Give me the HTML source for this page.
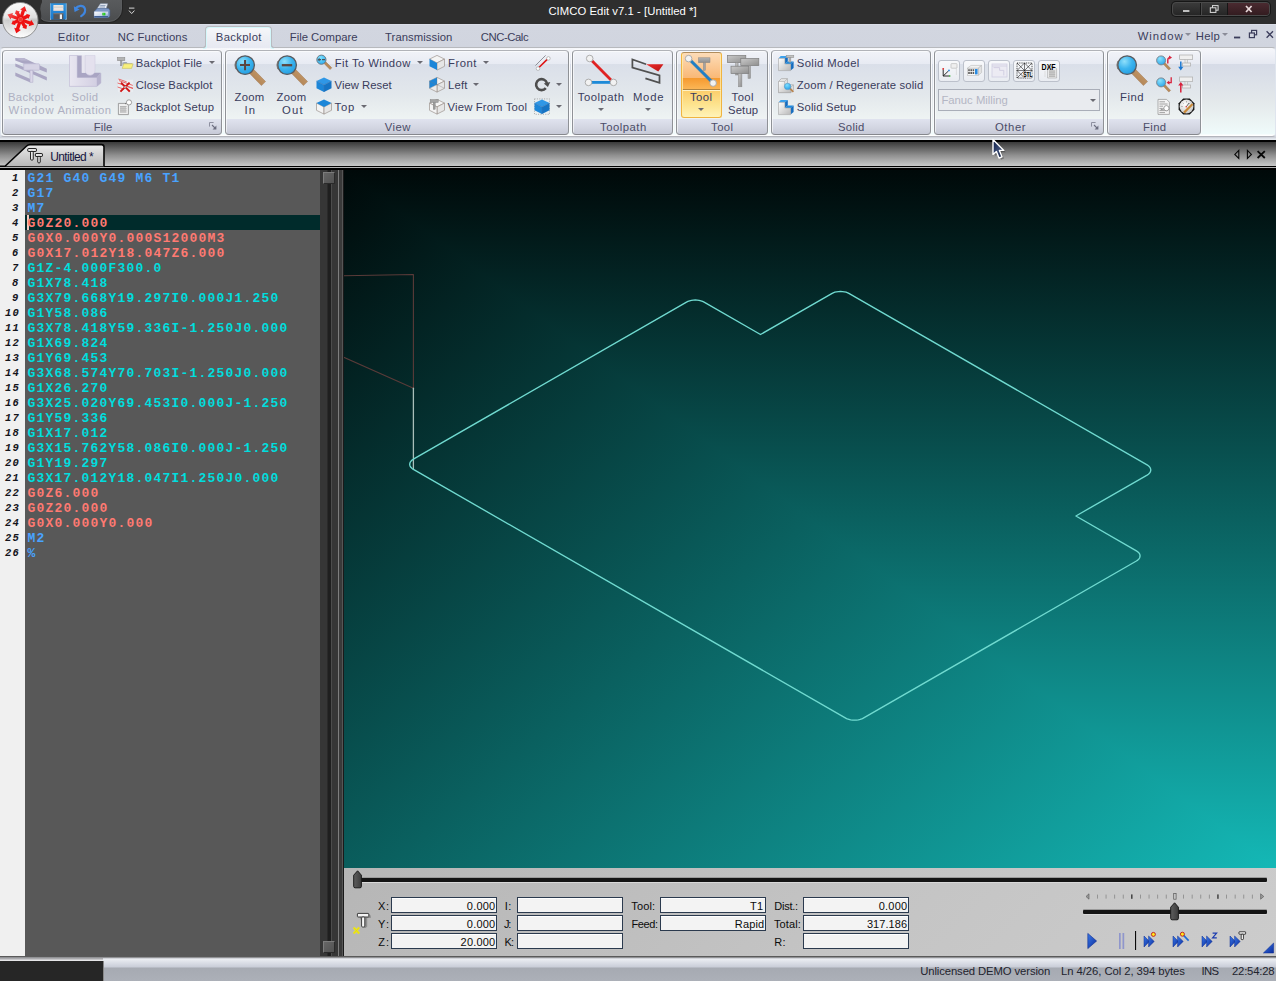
<!DOCTYPE html>
<html lang="en">
<head>
<meta charset="utf-8">
<title>CIMCO Edit v7.1 - [Untitled *]</title>
<style>

html,body{margin:0;padding:0;}
body{width:1276px;height:981px;overflow:hidden;background:#d1d5df;font-family:"Liberation Sans",sans-serif;font-size:12px;}
#app{position:relative;width:1276px;height:981px;overflow:hidden;}
#app div,#app span,#app svg{position:absolute;box-sizing:border-box;}
.t{white-space:pre;line-height:1;z-index:3;}
/* title bar */
#titlebar{left:0;top:0;width:1276px;height:24px;background:#2e2e2e;}
#qat{left:36px;top:-4px;width:86px;height:26px;border-radius:0 0 13px 13px/0 0 13px 13px;background:linear-gradient(#5b5d5f,#535557 55%,#4a4c4e);border:1px solid #5a5c5e;box-shadow:0 0 0 1px #242424;}
#winbtns{left:1172px;top:2px;width:98px;height:14px;border-radius:4px;border:1px solid #4a4a4a;box-shadow:0 0 0 1px #161616;background:linear-gradient(#3a3a3a,#262626);}
#winbtns .sep{top:0;width:1px;height:12px;background:#161616;box-shadow:1px 0 0 #4a4a4a;}
#winbtns .close{left:55px;top:0;width:41px;height:12px;background:linear-gradient(#4a2a30,#331c20);border-radius:0 3px 3px 0;}
/* tab row */
#tabrow{left:0;top:24px;width:1276px;height:24px;background:linear-gradient(#dfe2ec 0,#d2d6e0 1.5px,#d1d5df 24px);}
#tab-active{left:204.6px;top:1.6px;width:67.6px;height:22.2px;z-index:2;border:1px solid #b9bbc0;border-bottom:none;border-radius:4px 4px 0 0;background:linear-gradient(#f6f7fa,#eceef4 60%,#e7e9f2);box-shadow:inset 1px 1px 0 #d4f7fb,inset -1px 0 0 #d4f7fb;}
#tab-active:before,#tab-active:after{content:'';position:absolute;bottom:0;width:3px;height:3px;}
#tab-active:before{left:-3.6px;border-bottom:1px solid #b9bbc0;border-right:1px solid #b9bbc0;border-radius:0 0 3px 0;box-shadow:1px 1px 0 #d4f7fb;}
#tab-active:after{right:-3.6px;border-bottom:1px solid #b9bbc0;border-left:1px solid #b9bbc0;border-radius:0 0 0 3px;box-shadow:-1px 1px 0 #d4f7fb;}
/* ribbon */
#ribbon{left:0;top:47px;width:1276px;height:90px;border:1px solid #dfe5ee;border-top-color:#b7b9bd;border-bottom:1.3px solid #b3b5bc;border-radius:4px;background:linear-gradient(#f6f7fb 0,#e6e9f2 15.6px,#d6dbe7 15.8px,#dde2e9 36px,#e4e9eb 54px,#ebf3f3 72px,#effbfb 86px,#ffffff 87px);}
#ribbon-under{left:0;top:137px;width:1276px;height:3px;background:linear-gradient(#c9ccd4,#dde1e8 45%,#e8ecf1);}
.grp{top:3px;height:85px;border:1px solid #8f9297;border-top-color:#b1b3b8;border-bottom-color:#86888d;border-radius:4px;background:linear-gradient(#f1f3f8 0px,#e8ebf3 12.6px,#dadfe9 12.8px,#e3e8ec 45px,#eef3f3 67.5px,#e0e3ef 68px,#d4d7e3 76px,#c5c8d5 84px);box-shadow:0 0 0 1px #fafbfd, inset 1px 1px 0 rgba(255,255,255,.6);}
.ibtn{width:21.6px;height:21.4px;border:1px solid #bcc1cb;border-radius:3px;background:linear-gradient(#f8f9fb,#e9ecf1);}
.dd{width:0;height:0;border-left:3px solid transparent;border-right:3px solid transparent;border-top:3px solid #6a6a72;}
/* doc bar */
#docbar{left:0;top:140px;width:1276px;height:30px;background:linear-gradient(#000 0px,#000 1.7px,#3c3c3c 2.4px,#8e8e8e 15px,#c6c6c6 25.6px,#000 26px,#000 27px,#b4b4b4 27.2px,#b4b4b4 28px,#000 28.2px);}
/* editor */
#editor{left:0;top:170px;width:337px;height:786px;background:#585858;overflow:hidden;}
#gutter{left:0;top:0;width:25px;height:786px;background:#f0f0f0;}
#curline{left:25px;top:45px;width:295px;height:15px;background:#002b2b;}
#caret{left:27px;top:45px;width:1.5px;height:15px;background:#f2c8c0;}
#vscroll{left:320px;top:0;width:17px;height:786px;background:#363636;}
#vscroll .groove{left:6.6px;top:0;width:5px;height:786px;background:#1f1f1f;border-left:1px solid #2a2a2a;border-right:1px solid #4c4c4c;}
#vscroll .thumb{left:3px;width:11.5px;height:11.5px;background:linear-gradient(135deg,#666,#525252);border:1px solid #7c7c7c;border-right-color:#2a2a2a;border-bottom-color:#2a2a2a;}
#splitter{left:337px;top:170px;width:7px;height:788px;background:linear-gradient(to right,#363636 0,#363636 1px,#7e7e7e 1px,#7e7e7e 2px,#3a3a3a 2px,#3a3a3a 5px,#565656 5px,#565656 6px,#1a1a1a 6px);}
/* viewport */
#viewport{left:344px;top:170px;width:932px;height:698px;background:linear-gradient(180deg,#000909,#14b8b6);overflow:hidden;}
#viewport .tri{left:0;top:0;width:932px;height:698px;background:linear-gradient(140.95deg,#000909,#14b8b6);clip-path:polygon(0 0,100% 100%,0 100%);}
/* panel */
#panel{left:344px;top:868px;width:932px;height:88px;background:linear-gradient(135deg,#b6b6b6,#c4c4c4 55%,#cccccc);}
.fld{height:16px;border:1px solid #2b3a4e;background:#f3f3f3;box-shadow:inset 0 1px 0 #fff;}
.track{height:4px;background:#141414;border-radius:1px;box-shadow:0 1px 0 #d8d8d8,0 -1px 0 #9a9a9a;}
.sthumb{width:9px;height:18px;}
/* status */
#status{left:0;top:956px;width:1276px;height:25px;background:linear-gradient(#4a4a4a 0,#6a6a6a 1px,#b8bac0 2px,#eceef3 3px,#e2e5ec 5px,#c9cdd8 11px,#a6aab2 12px,#acb0b8 25px);}
#status .dark{left:0;top:5px;width:103.6px;height:20px;background:#262626;border-right:1px solid #888;}
#status .lite{left:0;top:2px;width:103px;height:3px;background:linear-gradient(#9a9a9e,#f4f4f6);}

</style>
</head>
<body>
<div id="app">
<div id="titlebar">
<div id="qat"></div>
<svg style="left:50px;top:3px" width="17" height="17" viewBox="0 0 17 17">
<defs><linearGradient id="sv" x1="0" y1="0" x2="0" y2="1"><stop offset="0" stop-color="#2f93de"/><stop offset="1" stop-color="#1a78cc"/></linearGradient></defs>
<rect x="0.3" y="0.3" width="16" height="16.2" fill="url(#sv)"/>
<path d="M0.3 0.3 V16.5 M16.3 0.3 V16.5" stroke="#9fd0f4" stroke-width="0.6"/>
<path d="M0.3 15.4 L1.4 16.5 H0.3 Z M16.3 15.4 L15.2 16.5 H16.3 Z" fill="#ffffff"/>
<rect x="3.4" y="2" width="10" height="5.6" fill="#e9e5e1"/><rect x="3.4" y="3.7" width="10" height="0.8" fill="#c9c3bb"/><rect x="3.4" y="6.6" width="10" height="1" fill="#f4d9cc"/>
<rect x="3.4" y="10.2" width="10" height="6.3" fill="#55575b"/><rect x="3.4" y="10.2" width="10" height="1" fill="#7a7c80"/><rect x="9.8" y="11.4" width="2.2" height="4.6" fill="#f0f0f0"/></svg>
<svg style="left:73px;top:3px" width="15" height="15" viewBox="0 0 15 15">
<path d="M2.2 5.6 C5 2.4 10.2 1.6 11.8 5.4 C13 8.6 10.6 11.6 8.2 13.2" fill="none" stroke="#3f86e0" stroke-width="2.2" stroke-linecap="round"/>
<path d="M0.8 3.2 L1.6 9 L6.6 6.6 Z" fill="#3f86e0"/></svg>
<svg style="left:93px;top:3px" width="18" height="16" viewBox="0 0 18 16">
<defs><linearGradient id="pr" x1="0" y1="0" x2="1" y2="1"><stop offset="0" stop-color="#ffffff"/><stop offset="0.6" stop-color="#c4d2ea"/><stop offset="1" stop-color="#6f8fc2"/></linearGradient></defs>
<path d="M4.2 5.6 L7.4 0.8 L14.6 0.8 L13.2 5.6 Z" fill="#f2f5fa" stroke="#8fa0b8" stroke-width="0.6"/>
<path d="M7.2 2.6 L12.6 2.6 M6.4 4 L12 4" stroke="#7f93b0" stroke-width="0.9"/>
<path d="M1.2 8.6 L4.2 5.4 H15.4 L16.8 7.2 V13 L15.4 14.6 H1.2 Z" fill="#7d98c6" stroke="#4c6a9a" stroke-width="0.5"/>
<path d="M1.2 8.6 H15 V14.4 H1.2 Z" fill="url(#pr)"/>
<rect x="1.2" y="13" width="13.8" height="1.5" fill="#3f5f96"/>
<rect x="9.4" y="9.8" width="3" height="2.6" fill="#12b412"/><rect x="10.2" y="10.4" width="1.2" height="1.2" fill="#7dff5a"/></svg>
<svg style="left:128.3px;top:6.7px" width="8" height="9" viewBox="0 0 8 9"><rect x="1" y="0.6" width="5.4" height="1" fill="#d8d8d8"/><path d="M1 3.6 L3.7 6.6 L6.4 3.6" fill="none" stroke="#d8d8d8" stroke-width="1"/></svg>
<span class="t" style="left:548.40px;top:6.00px;font-size:11.3px;color:#ffffff;letter-spacing:0.048px;">CIMCO Edit v7.1 - [Untitled *]</span>
<div id="winbtns"><div class="sep" style="left:27px"></div><div class="sep" style="left:54px"></div><div class="close"></div>
<svg style="left:0;top:0" width="96" height="12" viewBox="0 0 96 12">
<rect x="10" y="7.2" width="6.4" height="1.6" fill="#e4e4e4"/>
<rect x="39.5" y="2.6" width="5.6" height="4.6" fill="none" stroke="#dcdcdc" stroke-width="1"/><rect x="37.3" y="4.8" width="5.6" height="4.6" fill="#2c2c2c" stroke="#dcdcdc" stroke-width="1"/>
<path d="M73 3 L78.6 9 M78.6 3 L73 9" stroke="#e8d8da" stroke-width="1.7"/></svg>
</div>
</div>
<svg id="appbtn" style="left:0px;top:0px;z-index:5" width="42" height="42" viewBox="0 0 42 42">
<defs><linearGradient id="ab" x1="0" y1="0" x2="0" y2="1"><stop offset="0" stop-color="#fafafa"/><stop offset="0.42" stop-color="#dedede"/><stop offset="0.5" stop-color="#c2c2c2"/><stop offset="0.62" stop-color="#d4d4d4"/><stop offset="0.9" stop-color="#f6f6f6"/><stop offset="1" stop-color="#ffffff"/></linearGradient>
<radialGradient id="ab2" cx="0.5" cy="0.5" r="0.5"><stop offset="0" stop-color="#ffffff" stop-opacity="0.85"/><stop offset="0.75" stop-color="#ffffff" stop-opacity="0.25"/><stop offset="1" stop-color="#ffffff" stop-opacity="0"/></radialGradient>
<linearGradient id="ab3" x1="0" y1="0" x2="1" y2="1"><stop offset="0" stop-color="#ffffff" stop-opacity="0.6"/><stop offset="0.45" stop-color="#ffffff" stop-opacity="0"/></linearGradient></defs>
<path d="M0 24 V0 H44 Q40.5 3 40.2 9 Q42.4 16 40 24 Z" fill="#2e2e2e"/>
<circle cx="20.3" cy="20.2" r="17.7" fill="url(#ab)" stroke="#868686" stroke-width="0.9"/>
<ellipse cx="20.3" cy="20.2" rx="12" ry="16" fill="url(#ab2)"/>
<g fill="#ee1111"><polygon points="22.7,18.1 25.0,11.1 26.7,11.7 24.8,6.2 20.1,9.5 21.8,10.1 19.5,17.1"/><polygon points="19.2,17.3 12.4,14.7 13.0,12.9 7.5,14.6 10.6,19.5 11.2,17.8 18.0,20.3"/><polygon points="21.8,21.7 29.3,24.5 28.7,26.3 34.2,24.6 31.1,19.7 30.5,21.4 22.9,18.7"/><polygon points="18.3,20.9 16.0,28.3 14.2,27.8 16.2,33.2 20.9,29.9 19.2,29.3 21.5,21.9"/><polygon points="23.0,20.2 28.0,17.9 28.5,19.0 30.2,15.0 26.1,13.7 26.6,14.8 21.6,17.1"/><polygon points="20.1,22.1 23.3,27.2 22.2,27.8 26.4,29.0 27.2,24.8 26.2,25.4 23.0,20.3"/><polygon points="18.0,18.9 13.5,21.1 13.0,20.0 11.4,24.0 15.6,25.2 15.0,24.1 19.5,21.9"/><polygon points="21.2,17.0 18.9,12.3 20.0,11.8 16.0,10.2 14.8,14.3 15.9,13.8 18.1,18.4"/></g>
<circle cx="20.5" cy="19.5" r="2.1" fill="#f03a32"/>
<circle cx="20.3" cy="20.2" r="17.2" fill="url(#ab3)"/>
</svg>
<div id="tabrow"><div id="tab-active"></div></div>
<span class="t" style="left:57.70px;top:32.00px;font-size:11.3px;color:#3b3d5b;letter-spacing:0.477px;">Editor</span>
<span class="t" style="left:117.80px;top:32.00px;font-size:11.3px;color:#3b3d5b;letter-spacing:0.106px;">NC Functions</span>
<span class="t" style="left:215.80px;top:32.00px;font-size:11.3px;color:#3b3d5b;letter-spacing:0.322px;">Backplot</span>
<span class="t" style="left:289.80px;top:32.00px;font-size:11.3px;color:#3b3d5b;letter-spacing:-0.010px;">File Compare</span>
<span class="t" style="left:385.10px;top:32.00px;font-size:11.3px;color:#3b3d5b;letter-spacing:0.041px;">Transmission</span>
<span class="t" style="left:480.80px;top:32.00px;font-size:11.3px;color:#3b3d5b;letter-spacing:-0.435px;">CNC-Calc</span>
<span class="t" style="left:1137.70px;top:31.00px;font-size:11.3px;color:#3b3d5b;letter-spacing:0.943px;">Window</span>
<span class="t" style="left:1195.70px;top:31.00px;font-size:11.3px;color:#3b3d5b;letter-spacing:0.322px;">Help</span>
<div class="dd" style="left:1184.5px;top:33px;border-top-color:#8a8c98"></div>
<div class="dd" style="left:1221.5px;top:33px;border-top-color:#8a8c98"></div>
<svg style="left:1232px;top:28px" width="44" height="12" viewBox="0 0 44 12">
<rect x="2" y="8.6" width="6.2" height="1.8" fill="#3b3d5b"/>
<rect x="19.6" y="2.4" width="5" height="4.4" fill="none" stroke="#3b3d5b" stroke-width="1.2"/><rect x="17.4" y="5" width="5" height="4.6" fill="#d1d5df" stroke="#3b3d5b" stroke-width="1.2"/>
<path d="M34.6 3.2 L41 9.8 M41 3.2 L34.6 9.8" stroke="#3b3d5b" stroke-width="1.3"/></svg>
<div id="ribbon"></div><div id="ribbon-under"></div>
<div class="grp" id="grp-file" style="left:2px;top:50px;width:220px"></div>
<div class="grp" id="grp-view" style="left:225px;top:50px;width:344px"></div>
<div class="grp" id="grp-toolpath" style="left:572px;top:50px;width:101px"></div>
<div class="grp" id="grp-tool" style="left:676px;top:50px;width:92px"></div>
<div class="grp" id="grp-solid" style="left:771px;top:50px;width:160px"></div>
<div class="grp" id="grp-other" style="left:934px;top:50px;width:170px"></div>
<div class="grp" id="grp-find" style="left:1107px;top:50px;width:94px"></div>
<svg style="left:15px;top:56px" width="33" height="28" viewBox="0 0 33 28"><g fill="#aaa6c3">
<path d="M0.3 2.1 H8.7 L31.8 12.8 V16.4 L0.3 4.5 Z"/>
<path d="M0.3 7.4 L31.8 21 V24.6 L0.3 10.5 Z"/>
<path d="M0.3 16.4 L15.4 23 V26.5 L0.3 19.9 Z"/>
</g>
<path d="M0.3 2.1 H8.7 L14 4.6 H6 Z" fill="#b9b5cf"/>
<rect x="8.7" y="7.8" width="15.9" height="6.4" rx="0.8" fill="#d6d3e5" stroke="#bcb8d2" stroke-width="0.7"/>
<rect x="15" y="14.2" width="2.9" height="12" fill="#dad7e8" stroke="#b4b0cc" stroke-width="0.6"/></svg>
<svg style="left:69px;top:55px" width="33" height="32" viewBox="0 0 33 32"><defs><linearGradient id="g1" x1="0" y1="0" x2="1" y2="0"><stop offset="0" stop-color="#e9e7f1"/><stop offset="1" stop-color="#cfcbe0"/></linearGradient></defs>
<path d="M0.4 0.4 H8.3 V22.4 H27.8 L31.8 18 V28 L27.8 31.4 H0.4 Z" fill="url(#g1)" stroke="#c4c0d8" stroke-width="0.8"/>
<path d="M8.3 0.4 H12.8 V17.8 H31.8 L27.8 22.4 H8.3 Z" fill="#a9a5c3"/>
<path d="M27.8 22.4 L31.8 18 V28 L27.8 31.4 Z" fill="#b6b2cd"/>
<path d="M12.8 0.4 H16.2 V17.8 H12.8 Z" fill="#e7e5ef"/>
<path d="M16.2 0.4 H26 V15.6 A4.9 4.6 0 0 1 16.2 15.6 Z" fill="#e4e1ee" stroke="#d0cde0" stroke-width="0.6"/></svg>
<span class="t" style="left:8.00px;top:92.00px;font-size:11.3px;color:#aeb0c2;letter-spacing:0.322px;">Backplot</span>
<span class="t" style="left:8.60px;top:105.00px;font-size:11.3px;color:#aeb0c2;letter-spacing:0.963px;">Window</span>
<span class="t" style="left:71.60px;top:92.00px;font-size:11.3px;color:#aeb0c2;letter-spacing:0.344px;">Solid</span>
<span class="t" style="left:57.40px;top:105.00px;font-size:11.3px;color:#aeb0c2;letter-spacing:0.431px;">Animation</span>
<svg style="left:117px;top:56px" width="17" height="14" viewBox="0 0 17 14"><rect x="0.6" y="1.6" width="7.2" height="3" fill="#b4b4b4" stroke="#8c8c8c" stroke-width="0.6"/>
<rect x="3.3" y="4.6" width="1.7" height="5.2" fill="#a4a4a4" stroke="#8a8a8a" stroke-width="0.4"/>
<path d="M5.4 6.8 L7 6 H9.6 L10.6 7.2 H15 V8.6 H5.4 Z" fill="#8a93a6" opacity=".8"/>
<path d="M6.8 7.8 H16.1 L14.6 12.4 H5.2 Z" fill="#f7ef7c" stroke="#c4bc62" stroke-width="0.6"/></svg>
<svg style="left:117px;top:78px" width="17" height="15" viewBox="0 0 17 15"><rect x="1" y="1.8" width="15" height="12.4" fill="#e9edf1"/>
<g stroke="#e85a5a" stroke-width="0.9"><path d="M1.4 1 L9.6 3.8"/><path d="M2 2.6 L15.8 7.4"/><path d="M0.6 5 L16 10.2"/><path d="M0.6 9 L7 11.2"/><path d="M10 8.4 L16 10.6" /></g>
<path d="M3.4 13.6 L12.6 4.6 M4 4.6 L12.8 13.6" stroke="#d01414" stroke-width="2"/>
<path d="M7.2 9.4 L9.4 8.6" stroke="#a8e0e4" stroke-width="1.3"/></svg>
<svg style="left:117px;top:99px" width="16" height="17" viewBox="0 0 16 17"><path d="M1.4 4.4 H9.4 L11.4 6.6 V15.6 H1.4 Z" fill="#f0f0f0" stroke="#8c8c8c" stroke-width="0.8"/>
<g stroke="#a8a8a8" stroke-width="0.9"><path d="M3 7.6 H9.6"/><path d="M3 9.4 H9.6"/><path d="M3 11.2 H9.6"/><path d="M3 13 H9.6"/></g>
<rect x="3" y="8" width="6" height="5.4" fill="#bdbdbd" opacity=".7"/>
<path d="M8 5 L10.8 3" stroke="#6a6a6a" stroke-width="0.9"/>
<circle cx="12" cy="3.4" r="2.6" fill="#ffffff" stroke="#8a8a8a" stroke-width="0.8"/></svg>
<span class="t" style="left:135.80px;top:58.00px;font-size:11.3px;color:#3a3c5c;letter-spacing:0.136px;">Backplot File</span>
<div class="dd" style="left:208.5px;top:61px"></div>
<span class="t" style="left:135.80px;top:80.00px;font-size:11.3px;color:#3a3c5c;letter-spacing:0.088px;">Close Backplot</span>
<span class="t" style="left:135.80px;top:102.00px;font-size:11.3px;color:#3a3c5c;letter-spacing:0.169px;">Backplot Setup</span>
<span class="t" style="left:93.80px;top:122.00px;font-size:11.3px;color:#4b4c68;letter-spacing:0.132px;">File</span>
<svg style="left:209px;top:122px" width="8" height="8" viewBox="0 0 8 8"><path d="M0.5 4.6 V0.5 H4.6" fill="none" stroke="#8e90a0" stroke-width="1"/><path d="M3 3 L6.6 6.6" stroke="#6c6e80" stroke-width="1.1"/><path d="M7.4 3.6 V7.4 H3.6 Z" fill="#6c6e80"/></svg>
<svg style="left:233px;top:53px" width="34" height="34" viewBox="0 0 34 34"><defs><radialGradient id="g2" cx="0.36" cy="0.3" r="0.8"><stop offset="0" stop-color="#8fe0fb"/><stop offset="0.5" stop-color="#3cb4ee"/><stop offset="1" stop-color="#1f9ae0"/></radialGradient>
<linearGradient id="g3" x1="0" y1="1" x2="1" y2="0"><stop offset="0" stop-color="#a87a4c"/><stop offset="1" stop-color="#caa070"/></linearGradient></defs>
<path d="M16.2 20 L20.2 16 L32.6 28.6 L28.4 32.6 Z" fill="url(#g3)" stroke="#9a7048" stroke-width="0.4"/>
<circle cx="12.1" cy="12.1" r="9.3" fill="url(#g2)" stroke="#5a5a5e" stroke-width="1.3"/>
<path d="M3 8.4 A 9.6 9.6 0 0 0 3 16" fill="none" stroke="#6a6664" stroke-width="1.6" opacity=".8"/><path d="M7 12.1 H17 M12.05 7 V17.2" stroke="#5b4640" stroke-width="2"/></svg>
<svg style="left:275px;top:53px" width="34" height="34" viewBox="0 0 34 34"><defs><radialGradient id="g4" cx="0.36" cy="0.3" r="0.8"><stop offset="0" stop-color="#8fe0fb"/><stop offset="0.5" stop-color="#3cb4ee"/><stop offset="1" stop-color="#1f9ae0"/></radialGradient>
<linearGradient id="g5" x1="0" y1="1" x2="1" y2="0"><stop offset="0" stop-color="#a87a4c"/><stop offset="1" stop-color="#caa070"/></linearGradient></defs>
<path d="M16.2 20 L20.2 16 L32.6 28.6 L28.4 32.6 Z" fill="url(#g5)" stroke="#9a7048" stroke-width="0.4"/>
<circle cx="12.1" cy="12.1" r="9.3" fill="url(#g4)" stroke="#5a5a5e" stroke-width="1.3"/>
<path d="M3 8.4 A 9.6 9.6 0 0 0 3 16" fill="none" stroke="#6a6664" stroke-width="1.6" opacity=".8"/><path d="M6.8 12.2 H17.2" stroke="#5b4640" stroke-width="2.3"/></svg>
<span class="t" style="left:234.60px;top:92.00px;font-size:11.3px;color:#3a3c5c;letter-spacing:0.203px;">Zoom</span>
<span class="t" style="left:244.60px;top:105.00px;font-size:11.3px;color:#3a3c5c;letter-spacing:0.978px;">In</span>
<span class="t" style="left:276.60px;top:92.00px;font-size:11.3px;color:#3a3c5c;letter-spacing:0.203px;">Zoom</span>
<span class="t" style="left:282.00px;top:105.00px;font-size:11.3px;color:#3a3c5c;letter-spacing:1.191px;">Out</span>
<svg style="left:316px;top:54px" width="17" height="17" viewBox="0 0 17 17"><defs><radialGradient id="g6" cx="0.4" cy="0.3" r="0.8"><stop offset="0" stop-color="#7fe0ff"/><stop offset="1" stop-color="#22a8ee"/></radialGradient></defs>
<path d="M8 9.4 L9.8 7.8 L15.8 13.8 L14 15.6 Z" fill="#b88a58" stroke="#98704a" stroke-width="0.4"/>
<circle cx="5.4" cy="5.7" r="4.6" fill="url(#g6)" stroke="#6a7078" stroke-width="0.9"/>
<path d="M1.6 5.7 L3.6 3.8 V7.6 Z M3.4 5.1 H5 V6.3 H3.4 Z M6 5.1 H9 V6.3 H6 Z" fill="#4a5058"/></svg>
<svg style="left:316px;top:76px" width="16" height="17" viewBox="0 0 16 17"><polygon points="8,1.4 15.5,5.1 8,8.9 0.5,5.1" fill="#2f97e6"/><polygon points="0.5,5.1 8,8.9 8,16.1 0.5,12.3" fill="#1c86d8"/><polygon points="8,8.9 15.5,5.1 15.5,12.3 8,16.1" fill="#1674c4"/><path d="M8 8.9 V16 M0.6 5.1 L8 8.9 L15.4 5.1" fill="none" stroke="#3a78b8" stroke-width="0.7" opacity=".8"/></svg>
<svg style="left:316px;top:98px" width="16" height="17" viewBox="0 0 16 17"><polygon points="0.5,5.1 8,8.9 8,16.1 0.5,12.3" fill="#f4f4f4" stroke="#9c948e" stroke-width="0.7"/><polygon points="8,8.9 15.5,5.1 15.5,12.3 8,16.1" fill="#e6e6e6" stroke="#9c948e" stroke-width="0.7"/><polygon points="8,1.4 15.5,5.1 8,8.9 0.5,5.1" fill="#1c86d8"/></svg>
<span class="t" style="left:334.80px;top:58.00px;font-size:11.3px;color:#3a3c5c;letter-spacing:0.405px;">Fit To Window</span>
<div class="dd" style="left:416.6px;top:61px"></div>
<span class="t" style="left:334.60px;top:80.00px;font-size:11.3px;color:#3a3c5c;letter-spacing:0.007px;">View Reset</span>
<span class="t" style="left:334.60px;top:102.00px;font-size:11.3px;color:#3a3c5c;letter-spacing:0.741px;">Top</span>
<div class="dd" style="left:360.8px;top:105px"></div>
<svg style="left:429px;top:54px" width="16" height="17" viewBox="0 0 16 17"><polygon points="8,1.4 15.5,5.1 8,8.9 0.5,5.1" fill="#f4f4f4" stroke="#9c948e" stroke-width="0.7"/><polygon points="8,8.9 15.5,5.1 15.5,12.3 8,16.1" fill="#e6e6e6" stroke="#9c948e" stroke-width="0.7"/><polygon points="0.5,5.1 8,8.9 8,16.1 0.5,12.3" fill="#1c86d8"/></svg>
<svg style="left:429px;top:76px" width="16" height="17" viewBox="0 0 16 17"><polygon points="8,1.4 15.5,5.1 8,8.9 0.5,5.1" fill="#f4f4f4" stroke="#9c948e" stroke-width="0.7"/><polygon points="8,8.9 15.5,5.1 15.5,12.3 8,16.1" fill="#e6e6e6" stroke="#9c948e" stroke-width="0.7"/><polygon points="0.5,5.1 8,8.9 8,16.1 0.5,12.3" fill="#ececec" stroke="#9c948e" stroke-width="0.7"/><polygon points="0.5,5.1 8,1.4 8,8.6 0.5,12.3" fill="#1c86d8"/><path d="M8 1.4 V8.6 L15.5 12.3 M8 8.6 L0.5 12.3 M0.5 5.1 L8 8.9" fill="none" stroke="#7a7a80" stroke-width="0.5" opacity=".7"/></svg>
<svg style="left:429px;top:98px" width="16" height="17" viewBox="0 0 16 17"><polygon points="8,1.4 15.5,5.1 8,8.9 0.5,5.1" fill="#f4f4f4" stroke="#9c948e" stroke-width="0.7"/><polygon points="8,8.9 15.5,5.1 15.5,12.3 8,16.1" fill="#e6e6e6" stroke="#9c948e" stroke-width="0.7"/><polygon points="0.5,5.1 8,8.9 8,16.1 0.5,12.3" fill="#f4f4f4" stroke="#9c948e" stroke-width="0.7"/><rect x="1.2" y="1.6" width="8" height="2.8" fill="#a4a4a4" stroke="#868686" stroke-width="0.5"/><rect x="4.2" y="4.4" width="2" height="7" fill="#9a9a9a" stroke="#868686" stroke-width="0.4"/></svg>
<span class="t" style="left:448.10px;top:58.00px;font-size:11.3px;color:#3a3c5c;letter-spacing:0.481px;">Front</span>
<div class="dd" style="left:482.8px;top:61px"></div>
<span class="t" style="left:448.10px;top:80.00px;font-size:11.3px;color:#3a3c5c;letter-spacing:0.119px;">Left</span>
<div class="dd" style="left:473.4px;top:83px"></div>
<span class="t" style="left:447.60px;top:102.00px;font-size:11.3px;color:#3a3c5c;letter-spacing:0.143px;">View From Tool</span>
<svg style="left:534px;top:54px" width="17" height="17" viewBox="0 0 17 17"><path d="M1.4 11.6 L11.6 1.4 M3.4 15 L15 3.6" stroke="#7a7a82" stroke-width="0.8"/>
<path d="M4.4 14 L14 4.6" stroke="#e01818" stroke-width="1.6"/>
<circle cx="4" cy="14.6" r="1.8" fill="#fff" stroke="#9a9a9a" stroke-width="0.6"/><circle cx="14.4" cy="4.4" r="1.8" fill="#fff" stroke="#9a9a9a" stroke-width="0.6"/></svg>
<svg style="left:534px;top:76px" width="17" height="17" viewBox="0 0 17 17"><path d="M11.81 12.14 A5.5 5.5 0 1 1 12.91 7.18" fill="none" stroke="#4e4e4e" stroke-width="2.6"/>
<path d="M9.8 7.6 L16.3 6 L13.9 11 Z" fill="#4e4e4e"/></svg>
<svg style="left:534px;top:98px" width="16" height="17" viewBox="0 0 16 17"><rect x="0.5" y="0.9" width="15" height="15.4" fill="none" stroke="#8a8a8a" stroke-width="0.7" stroke-dasharray="1 1.4"/><polygon points="8,1.4 15.5,5.1 8,8.9 0.5,5.1" fill="#2f97e6"/><polygon points="0.5,5.1 8,8.9 8,16.1 0.5,12.3" fill="#1c86d8"/><polygon points="8,8.9 15.5,5.1 15.5,12.3 8,16.1" fill="#1674c4"/><path d="M8 8.9 V16 M0.6 5.1 L8 8.9 L15.4 5.1" fill="none" stroke="#3a78b8" stroke-width="0.7" opacity=".8"/></svg>
<div class="dd" style="left:555.6px;top:83px"></div>
<div class="dd" style="left:555.6px;top:105px"></div>
<span class="t" style="left:384.80px;top:122.00px;font-size:11.3px;color:#4b4c68;letter-spacing:0.434px;">View</span>
<svg style="left:583px;top:52px" width="36" height="36" viewBox="0 0 36 36"><path d="M5.5 30.4 H30.5" stroke="#1e8ad8" stroke-width="2.8"/>
<path d="M6.7 6.5 L30.5 30.4" stroke="#e02222" stroke-width="2.8"/>
<g fill="#f2f2f2" stroke="#a6a6a6" stroke-width="0.9"><circle cx="6.7" cy="6.5" r="3.3"/><circle cx="5.5" cy="30.4" r="3.3"/><circle cx="30.5" cy="30.4" r="3.3"/></g></svg>
<svg style="left:631px;top:57px" width="34" height="28" viewBox="0 0 34 28"><defs><linearGradient id="g7" x1="0" y1="0" x2="1" y2="1"><stop offset="0" stop-color="#ee2a2a"/><stop offset="1" stop-color="#b81414"/></linearGradient></defs>
<path d="M15.1 7.3 L1.4 2.4 V10.6 L28.5 18.5 V25.9 L14.4 21.4" fill="none" stroke="#505050" stroke-width="1.75"/>
<path d="M15.1 7.3 L32.4 7.2 L27.3 14.5 Z" fill="url(#g7)"/></svg>
<span class="t" style="left:577.80px;top:92.00px;font-size:11.3px;color:#3a3c5c;letter-spacing:0.497px;">Toolpath</span>
<div class="dd" style="left:597.6px;top:107.5px"></div>
<span class="t" style="left:632.90px;top:92.00px;font-size:11.3px;color:#3a3c5c;letter-spacing:0.811px;">Mode</span>
<div class="dd" style="left:644.6px;top:107.5px"></div>
<span class="t" style="left:600.00px;top:122.00px;font-size:11.3px;color:#4b4c68;letter-spacing:0.497px;">Toolpath</span>
<div id="toolbtn" style="left:680.5px;top:52px;width:41px;height:66px;border:1px solid #f0b440;border-top-color:#b08c5c;border-radius:3px;background:linear-gradient(#fddcb8 0,#f9b876 25px,#f5992e 25px,#fbb656 36px,#b08440 36px,#b08440 37px,#fff2c4 37px,#fff2c4 38px,#fcce6c 38px,#fde490 52px,#fff3b8 64px);box-shadow:inset 1px 0 0 rgba(255,236,170,.8),inset -1px 0 0 rgba(255,236,170,.8);"></div>
<svg style="left:683px;top:53px" width="36" height="36" viewBox="0 0 36 36"><defs><linearGradient id="g8" x1="0" y1="0" x2="0" y2="1"><stop offset="0" stop-color="#b4b4b4"/><stop offset="1" stop-color="#8e8e8e"/></linearGradient></defs>
<rect x="15.5" y="4.8" width="11.5" height="4.8" fill="url(#g8)" stroke="#8a8682" stroke-width="0.5"/><rect x="20.3" y="9.6" width="2.2" height="7.9" fill="#a2a2a2" stroke="#8a8682" stroke-width="0.4"/>
<path d="M5.6 5.6 L30.1 30.1" stroke="#1e8ad8" stroke-width="2.8"/><path d="M5.6 5.6 L30.1 30.1" stroke="#2a5f8e" stroke-width="3.6" opacity=".25"/>
<g fill="#f2f2f2" stroke="#a6a6a6" stroke-width="0.9"><circle cx="5.6" cy="5.6" r="3.3"/><circle cx="30.1" cy="30.1" r="3.3"/></g></svg>
<svg style="left:727px;top:54px" width="33" height="34" viewBox="0 0 33 34"><defs><linearGradient id="g9" x1="0" y1="0" x2="1" y2="1"><stop offset="0" stop-color="#cacaca"/><stop offset="1" stop-color="#8e8e8e"/></linearGradient></defs><rect x="0.4" y="1.4" width="18.4" height="7.2" fill="url(#g9)" stroke="#7e7e7e" stroke-width="0.7"/><rect x="8.5" y="8.6" width="2.6" height="12.4" fill="url(#g9)" stroke="#8a8a8a" stroke-width="0.5"/><rect x="13.8" y="4.4" width="18" height="7.2" fill="url(#g9)" stroke="#7e7e7e" stroke-width="0.7"/><rect x="21" y="11.6" width="2.5" height="12.8" fill="url(#g9)" stroke="#8a8a8a" stroke-width="0.5"/><rect x="4" y="12.2" width="17.8" height="7.4" fill="url(#g9)" stroke="#7e7e7e" stroke-width="0.7"/><rect x="11.3" y="19.6" width="3.6" height="13.2" fill="url(#g9)" stroke="#8a8a8a" stroke-width="0.5"/></svg>
<span class="t" style="left:690.00px;top:92.00px;font-size:11.3px;color:#3a3c5c;letter-spacing:0.455px;">Tool</span>
<div class="dd" style="left:697.8px;top:107.5px"></div>
<span class="t" style="left:731.60px;top:92.00px;font-size:11.3px;color:#3a3c5c;letter-spacing:0.422px;">Tool</span>
<span class="t" style="left:728.00px;top:105.00px;font-size:11.3px;color:#3a3c5c;letter-spacing:0.142px;">Setup</span>
<span class="t" style="left:711.10px;top:122.00px;font-size:11.3px;color:#4b4c68;letter-spacing:0.422px;">Tool</span>
<svg style="left:778px;top:55px" width="17" height="17" viewBox="0 0 17 17"><defs><linearGradient id="g10" x1="0" y1="0" x2="1" y2="1"><stop offset="0" stop-color="#ffffff"/><stop offset="1" stop-color="#b8b8b8"/></linearGradient></defs><path d="M0.5 3.4 L2.7 1 H9.8 L6.8 3.4 Z" fill="#3aa0ec"/>
<path d="M6.8 3.4 L9.8 1 V6.6 L6.8 9 Z" fill="#146cc0"/>
<path d="M6.8 9 L9.8 6.6 H15.6 L12.6 9 Z" fill="#1c8ae0"/>
<path d="M12.6 9 L15.6 6.6 V13 L12.6 15.6 Z" fill="#146cc0"/>
<path d="M0.5 3.4 H6.8 V9 H12.6 V15.6 H0.5 Z" fill="url(#g10)" stroke="#a4a4a4" stroke-width="0.6"/><rect x="8.2" y="0.3" width="7.6" height="2.4" fill="#c2c2c2" stroke="#8e8e8e" stroke-width="0.5"/><rect x="10.9" y="2.7" width="2" height="4.6" fill="#b0b0b0" stroke="#8e8e8e" stroke-width="0.4"/></svg>
<svg style="left:778px;top:77px" width="17" height="17" viewBox="0 0 17 17"><defs><linearGradient id="g11" x1="0" y1="0" x2="1" y2="1"><stop offset="0" stop-color="#ffffff"/><stop offset="1" stop-color="#b8b8b8"/></linearGradient></defs><path d="M0.5 4.5 L3.4 1.6 H9.4 V7.8 H15.4 V13 L13 15.6 H0.5 Z" fill="#e4e4e4" stroke="#a8a8a8" stroke-width="0.7"/>
<path d="M0.5 4.5 H6.6 V10.2 H13 V15.6 H0.5 Z" fill="url(#g11)" stroke="#a8a8a8" stroke-width="0.6"/>
<path d="M6.6 4.5 L9.4 1.6 M13 10.2 L15.4 7.8" stroke="#a8a8a8" stroke-width="0.6"/>
<defs><radialGradient id="g12" cx=".4" cy=".3" r=".8"><stop offset="0" stop-color="#7fe0ff"/><stop offset="1" stop-color="#1f9ae6"/></radialGradient></defs>
<path d="M11 11.8 L12.2 10.6 L16 14.2 L14.8 15.6 Z" fill="#b88450"/>
<circle cx="9.6" cy="9.4" r="3.2" fill="url(#g12)" stroke="#5a9ac8" stroke-width="0.6"/></svg>
<svg style="left:778px;top:99px" width="17" height="17" viewBox="0 0 17 17"><defs><linearGradient id="g13" x1="0" y1="0" x2="1" y2="1"><stop offset="0" stop-color="#ffffff"/><stop offset="1" stop-color="#b8b8b8"/></linearGradient></defs><path d="M0.5 3.4 L2.7 1 H9.8 L6.8 3.4 Z" fill="#3aa0ec"/>
<path d="M6.8 3.4 L9.8 1 V6.6 L6.8 9 Z" fill="#146cc0"/>
<path d="M6.8 9 L9.8 6.6 H15.6 L12.6 9 Z" fill="#1c8ae0"/>
<path d="M12.6 9 L15.6 6.6 V13 L12.6 15.6 Z" fill="#146cc0"/>
<path d="M0.5 3.4 H6.8 V9 H12.6 V15.6 H0.5 Z" fill="url(#g13)" stroke="#a4a4a4" stroke-width="0.6"/></svg>
<span class="t" style="left:796.80px;top:58.00px;font-size:11.3px;color:#3a3c5c;letter-spacing:0.347px;">Solid Model</span>
<span class="t" style="left:796.80px;top:80.00px;font-size:11.3px;color:#3a3c5c;letter-spacing:0.126px;">Zoom / Regenerate solid</span>
<span class="t" style="left:796.80px;top:102.00px;font-size:11.3px;color:#3a3c5c;letter-spacing:0.152px;">Solid Setup</span>
<span class="t" style="left:838.00px;top:122.00px;font-size:11.3px;color:#4b4c68;letter-spacing:0.319px;">Solid</span>
<div class="ibtn" style="left:938.2px;top:60.3px"></div>
<svg style="left:940.5px;top:62.3px" width="17" height="17" viewBox="0 0 17 17"><rect x="10" y="1.6" width="6" height="4.6" rx="0.6" fill="#efefef" stroke="#b4b4b4" stroke-width="0.6"/><path d="M15.4 6.4 V13" stroke="#cfcfcf" stroke-width="0.6"/>
<path d="M2.2 7.4 V14 H8.4 M2.2 14 L7.6 8.8" fill="none" stroke="#161616" stroke-width="0.9"/>
<circle cx="2.2" cy="6.8" r="0.9" fill="#e02020"/><circle cx="8" cy="8.4" r="0.9" fill="#2a8ae0"/><path d="M8.2 12.9 L10 14 L8.2 15.1 Z" fill="#30b030"/></svg>
<div class="ibtn" style="left:963.2px;top:60.3px"></div>
<svg style="left:965.5px;top:62.3px" width="17" height="17" viewBox="0 0 17 17"><path d="M1.4 6.2 L5 3.4 H15.6 L12.2 6.2 Z" fill="#f2f2f2" stroke="#b0b0b0" stroke-width="0.5"/><path d="M12.2 6.2 L15.6 3.4 V10.6 L12.2 13.4 Z" fill="#e2e2e2" stroke="#b0b0b0" stroke-width="0.5"/>
<rect x="1.4" y="6.2" width="10.8" height="7.2" fill="#fafafa" stroke="#b0b0b0" stroke-width="0.5"/>
<g fill="#5a5a5a"><rect x="2.2" y="7.2" width="1.6" height="2"/><rect x="4.4" y="7.2" width="1.6" height="2"/><rect x="6.6" y="7.2" width="1.6" height="2"/><rect x="2.2" y="10" width="1.6" height="2"/><rect x="4.4" y="10" width="1.6" height="2"/><rect x="6.6" y="10" width="1.6" height="2"/></g>
<rect x="9" y="7" width="2.6" height="5.4" fill="#2a8ae0"/></svg>
<div class="ibtn" style="left:988.2px;top:60.3px"></div>
<svg style="left:990.5px;top:62.3px" width="17" height="17" viewBox="0 0 17 17"><rect x="1" y="2" width="15" height="13" fill="#ecebf3" stroke="#d0cde0" stroke-width="0.8"/><path d="M1 4 H16" stroke="#d0cde0" stroke-width="0.8"/>
<path d="M2.6 5.6 H8.6 V8.4 H12.8 V13.4" fill="none" stroke="#cfcce0" stroke-width="0.9"/></svg>
<div class="ibtn" style="left:1013.2px;top:60.3px"></div>
<svg style="left:1015.5px;top:62.3px" width="17" height="17" viewBox="0 0 17 17"><g stroke="#181818" stroke-width="0.75" fill="none"><rect x="1" y="1" width="15" height="15" stroke-dasharray="1 0.8"/><path d="M1 1 L8.5 8.5 L16 1 M1 16 L8.5 8.5 L16 16 M1 8.5 H16 M8.5 1 V16 M1 8.5 L8.5 1 L16 8.5 L8.5 16 Z" opacity=".75"/></g>
<rect x="7" y="9.6" width="9.4" height="6" fill="#e8e8e8" opacity=".85"/>
<text x="7.2" y="15" font-family="Liberation Sans, sans-serif" font-weight="700" font-size="6.6" fill="#000" textLength="9.4" lengthAdjust="spacingAndGlyphs">STL</text></svg>
<div class="ibtn" style="left:1038.2px;top:60.3px"></div>
<svg style="left:1040.5px;top:62.3px" width="17" height="17" viewBox="0 0 17 17"><path d="M6.6 4.6 H13.4 L15.6 6.8 V16 H6.6 Z" fill="#ececec" stroke="#a4a4a4" stroke-width="0.6"/>
<g stroke="#a8a8a8" stroke-width="0.8"><path d="M8 9 H14.2"/><path d="M8 10.8 H14.2"/><path d="M8 12.6 H14.2"/><path d="M8 14.4 H14.2"/></g><rect x="8" y="8.4" width="6.2" height="6.6" fill="#b8b8b8" opacity=".6"/>
<path d="M4 9 V15" stroke="#d0d0d0" stroke-width="0.6"/>
<text x="0.6" y="7.6" font-family="Liberation Sans, sans-serif" font-weight="700" font-size="8.6" fill="#000" textLength="14" lengthAdjust="spacingAndGlyphs">DXF</text></svg>
<div id="combo" style="left:938px;top:89.2px;width:162px;height:21.6px;border:1px solid #a9aeb8;background:#e9ebef;"></div>
<span class="t" style="left:941.40px;top:95.00px;font-size:11.3px;color:#b4b6c4;letter-spacing:-0.005px;">Fanuc Milling</span>
<div class="dd" style="left:1089.6px;top:98.5px"></div>
<span class="t" style="left:995.00px;top:122.00px;font-size:11.3px;color:#4b4c68;letter-spacing:0.584px;">Other</span>
<svg style="left:1091px;top:122px" width="8" height="8" viewBox="0 0 8 8"><path d="M0.5 4.6 V0.5 H4.6" fill="none" stroke="#8e90a0" stroke-width="1"/><path d="M3 3 L6.6 6.6" stroke="#6c6e80" stroke-width="1.1"/><path d="M7.4 3.6 V7.4 H3.6 Z" fill="#6c6e80"/></svg>
<svg style="left:1114.5px;top:53px" width="34" height="34" viewBox="0 0 34 34"><defs><radialGradient id="g14" cx="0.36" cy="0.3" r="0.8"><stop offset="0" stop-color="#8fe0fb"/><stop offset="0.5" stop-color="#3cb4ee"/><stop offset="1" stop-color="#1f9ae0"/></radialGradient>
<linearGradient id="g15" x1="0" y1="1" x2="1" y2="0"><stop offset="0" stop-color="#a87a4c"/><stop offset="1" stop-color="#caa070"/></linearGradient></defs>
<path d="M16.2 20 L20.2 16 L32.6 28.6 L28.4 32.6 Z" fill="url(#g15)" stroke="#9a7048" stroke-width="0.4"/>
<circle cx="12.1" cy="12.1" r="9.3" fill="url(#g14)" stroke="#5a5a5e" stroke-width="1.3"/>
<path d="M3 8.4 A 9.6 9.6 0 0 0 3 16" fill="none" stroke="#6a6664" stroke-width="1.6" opacity=".8"/></svg>
<span class="t" style="left:1120.00px;top:92.00px;font-size:11.3px;color:#3a3c5c;letter-spacing:0.539px;">Find</span>
<svg style="left:1156px;top:54px" width="17" height="17" viewBox="0 0 17 17"><defs><radialGradient id="g16" cx=".38" cy=".3" r=".8"><stop offset="0" stop-color="#8ae2fc"/><stop offset="1" stop-color="#22a0e8"/></radialGradient></defs>
<path d="M7.4 10.2 L9 8.6 L14.6 14.4 L12.8 16 Z" fill="#b88a58" stroke="#98704a" stroke-width="0.4"/>
<circle cx="5.1" cy="6.4" r="4.5" fill="url(#g16)" stroke="#7a8088" stroke-width="0.9"/><path d="M11.8 9.4 V6 Q11.8 3.8 13.6 3.6" fill="none" stroke="#d8203a" stroke-width="1.4"/><path d="M13 1.4 L16 3.4 L13.2 5.6 Z" fill="#d8203a"/></svg>
<svg style="left:1156px;top:76px" width="17" height="17" viewBox="0 0 17 17"><defs><radialGradient id="g17" cx=".38" cy=".3" r=".8"><stop offset="0" stop-color="#8ae2fc"/><stop offset="1" stop-color="#22a0e8"/></radialGradient></defs>
<path d="M7.4 10.2 L9 8.6 L14.6 14.4 L12.8 16 Z" fill="#b88a58" stroke="#98704a" stroke-width="0.4"/>
<circle cx="5.1" cy="6.4" r="4.5" fill="url(#g17)" stroke="#7a8088" stroke-width="0.9"/><path d="M15.2 1.2 V6.6 H12.6" fill="none" stroke="#d8203a" stroke-width="1.3"/><path d="M13.2 4.4 L10.6 6.8 L13.6 8.8 Z" fill="#d8203a"/></svg>
<svg style="left:1157px;top:98px" width="14" height="18" viewBox="0 0 14 18"><path d="M1 1.4 H9.6 L12.4 4.2 V16.4 H1 Z" fill="#f4f4f4" stroke="#9c9c9c" stroke-width="0.8"/>
<g stroke="#8e8e8e" stroke-width="0.8"><path d="M2.4 3.8 H8"/><path d="M2.4 6 H10.6"/><path d="M2.4 8.2 H6"/><path d="M2.4 10.4 H5.4"/><path d="M2.4 12.6 H10.6"/><path d="M2.4 14.6 H8"/></g>
<path d="M3.8 11.6 L7.4 10.6" stroke="#9a9a9a" stroke-width="1.4"/>
<circle cx="9.4" cy="10.2" r="2.6" fill="#ffffff" stroke="#8a8a8a" stroke-width="0.8"/></svg>
<svg style="left:1178px;top:54px" width="17" height="18" viewBox="0 0 17 18"><rect x="1.6" y="1" width="13" height="4.4" fill="#efefef" stroke="#b4b4b4" stroke-width="0.8"/><rect x="7" y="5.4" width="2.6" height="3.8" fill="#e8e8e8" stroke="#b4b4b4" stroke-width="0.6"/><rect x="4.6" y="9" width="8" height="3" fill="#efefef" stroke="#b4b4b4" stroke-width="0.8"/><path d="M2.8 7.6 V14" stroke="#1c78d0" stroke-width="1.5"/><path d="M0.2 12.8 H5.4 L2.8 16.4 Z" fill="#1c78d0"/></svg>
<svg style="left:1178px;top:76px" width="17" height="18" viewBox="0 0 17 18"><rect x="1.6" y="1" width="13" height="4.4" fill="#efefef" stroke="#b4b4b4" stroke-width="0.8"/><rect x="7" y="5.4" width="2.6" height="3.8" fill="#e8e8e8" stroke="#b4b4b4" stroke-width="0.6"/><rect x="4.6" y="9" width="8" height="3" fill="#efefef" stroke="#b4b4b4" stroke-width="0.8"/><path d="M2.8 16.6 V8.6" stroke="#d8203a" stroke-width="1.5"/><path d="M0.2 9.6 H5.4 L2.8 6 Z" fill="#d8203a"/></svg>
<svg style="left:1178px;top:98px" width="17" height="17" viewBox="0 0 17 17"><defs><radialGradient id="g18" cx=".4" cy=".35" r=".7"><stop offset="0" stop-color="#ffffff"/><stop offset="1" stop-color="#c8c8c8"/></radialGradient></defs>
<polygon points="5.2,0.6 11.8,0.6 16.4,5.2 16.4,11.8 11.8,16.4 5.2,16.4 0.6,11.8 0.6,5.2" fill="#151515"/>
<circle cx="8.5" cy="8.5" r="6.9" fill="url(#g18)"/>
<g stroke="#555" stroke-width="0.5"><path d="M3.4 8.5 H4.6"/><path d="M4.8 4.8 L5.6 5.6"/><path d="M8.5 3.2 V4.4"/><path d="M12.2 4.8 L11.4 5.6"/></g>
<path d="M8.5 8.5 L11 5" stroke="#333" stroke-width="0.7"/><circle cx="8.2" cy="8.8" r="0.7" fill="#e02020"/>
<path d="M6 14.6 L14.6 6" stroke="#c88a3a" stroke-width="2.2"/></svg>
<span class="t" style="left:1143.00px;top:122.00px;font-size:11.3px;color:#4b4c68;letter-spacing:0.372px;">Find</span>
<div id="docbar"></div>
<svg id="doctab" style="left:0;top:141px" width="120" height="29" viewBox="0 0 120 29">
<defs><linearGradient id="dt" x1="0" y1="0" x2="0" y2="1"><stop offset="0" stop-color="#e9e9e9"/><stop offset="1" stop-color="#b9b9b9"/></linearGradient></defs>
<path d="M5 25.3 L26.6 5 Q28 3.6 30 3.6 H101.6 Q104 3.6 104 6 V25.3 Z" fill="url(#dt)"/>
<path d="M0 25.3 H5 L26.6 5 Q28 3.6 30 3.6 H101.6 Q104 3.6 104 6 V25.3" fill="none" stroke="#050505" stroke-width="1.6"/>
<g fill="#ffffff" stroke="#111" stroke-width="1"><rect x="27.8" y="7.6" width="8.6" height="2.8" rx="0.5"/><rect x="30.6" y="10.4" width="2.6" height="8.6" rx="0.8"/>
<rect x="35.4" y="12.6" width="7" height="2.8" rx="0.5"/><rect x="37.8" y="15.4" width="2.4" height="6.4" rx="0.8"/></g></svg>
<span class="t" style="left:50.20px;top:151.00px;font-size:12px;color:#16163e;letter-spacing:-0.589px;">Untitled *</span>
<svg style="left:1232px;top:149px" width="38" height="11" viewBox="0 0 38 11">
<path d="M6.8 1.4 L2.8 5.4 L6.8 9.4 Z" fill="none" stroke="#080808" stroke-width="1.1"/><path d="M15.4 1.4 L19.4 5.4 L15.4 9.4 Z" fill="none" stroke="#080808" stroke-width="1.1"/>
<path d="M25.6 2.2 L32.8 9 M32.8 2.2 L25.6 9" stroke="#080808" stroke-width="1.8"/></svg>
<svg id="cursor" style="left:991px;top:137.6px;z-index:9" width="18" height="24" viewBox="0 0 18 24">
<defs><linearGradient id="cur" x1="0" y1="0" x2="1" y2="1"><stop offset="0" stop-color="#0a1a44"/><stop offset="0.5" stop-color="#3a4a72"/><stop offset="1" stop-color="#0a1638"/></linearGradient></defs>
<path d="M3 3 V16.6 L6.2 13.8 L8.8 20.4 L11.8 19.2 L9.2 12.8 H13.6 Z" fill="#000" opacity=".28" transform="translate(1.2 1.4)"/>
<path d="M2 1.6 V16.4 L5.4 13.4 L8 20 L11 18.8 L8.4 12.4 H12.8 Z" fill="url(#cur)" stroke="#ffffff" stroke-width="1.4" stroke-linejoin="round"/></svg>
<div id="editor"><div id="gutter"></div><div id="curline"></div><div id="caret"></div>
<div id="vscroll"><div class="groove"></div><div class="thumb" style="top:2px"></div><div class="thumb" style="top:771px"></div></div>
</div>
<span class="t code" style="left:27.50px;top:172.00px;font-size:13px;color:#49a3ff;letter-spacing:1.205px;font-weight:700;font-family:'Liberation Mono', monospace;">G21 G40 G49 M6 T1</span>
<span class="t ln" style="left:12.00px;top:173.00px;font-size:10.5px;color:#15151c;font-weight:700;font-style:italic;font-family:'Liberation Mono', monospace;">1</span>
<span class="t code" style="left:27.50px;top:187.00px;font-size:13px;color:#49a3ff;letter-spacing:1.247px;font-weight:700;font-family:'Liberation Mono', monospace;">G17</span>
<span class="t ln" style="left:12.00px;top:188.00px;font-size:10.5px;color:#15151c;font-weight:700;font-style:italic;font-family:'Liberation Mono', monospace;">2</span>
<span class="t code" style="left:27.50px;top:202.00px;font-size:13px;color:#49a3ff;letter-spacing:1.291px;font-weight:700;font-family:'Liberation Mono', monospace;">M7</span>
<span class="t ln" style="left:12.00px;top:203.00px;font-size:10.5px;color:#15151c;font-weight:700;font-style:italic;font-family:'Liberation Mono', monospace;">3</span>
<span class="t code" style="left:27.50px;top:217.00px;font-size:13px;color:#ff7a72;letter-spacing:1.210px;font-weight:700;font-family:'Liberation Mono', monospace;">G0Z20.000</span>
<span class="t ln" style="left:12.00px;top:218.00px;font-size:10.5px;color:#15151c;font-weight:700;font-style:italic;font-family:'Liberation Mono', monospace;">4</span>
<span class="t code" style="left:27.50px;top:232.00px;font-size:13px;color:#ff7a72;letter-spacing:1.203px;font-weight:700;font-family:'Liberation Mono', monospace;">G0X0.000Y0.000S12000M3</span>
<span class="t ln" style="left:12.00px;top:233.00px;font-size:10.5px;color:#15151c;font-weight:700;font-style:italic;font-family:'Liberation Mono', monospace;">5</span>
<span class="t code" style="left:27.50px;top:247.00px;font-size:13px;color:#ff7a72;letter-spacing:1.203px;font-weight:700;font-family:'Liberation Mono', monospace;">G0X17.012Y18.047Z6.000</span>
<span class="t ln" style="left:12.00px;top:248.00px;font-size:10.5px;color:#15151c;font-weight:700;font-style:italic;font-family:'Liberation Mono', monospace;">6</span>
<span class="t code" style="left:27.50px;top:262.00px;font-size:13px;color:#00dede;letter-spacing:1.205px;font-weight:700;font-family:'Liberation Mono', monospace;">G1Z-4.000F300.0</span>
<span class="t ln" style="left:12.00px;top:263.00px;font-size:10.5px;color:#15151c;font-weight:700;font-style:italic;font-family:'Liberation Mono', monospace;">7</span>
<span class="t code" style="left:27.50px;top:277.00px;font-size:13px;color:#00dede;letter-spacing:1.210px;font-weight:700;font-family:'Liberation Mono', monospace;">G1X78.418</span>
<span class="t ln" style="left:12.00px;top:278.00px;font-size:10.5px;color:#15151c;font-weight:700;font-style:italic;font-family:'Liberation Mono', monospace;">8</span>
<span class="t code" style="left:27.50px;top:292.00px;font-size:13px;color:#00dede;letter-spacing:1.202px;font-weight:700;font-family:'Liberation Mono', monospace;">G3X79.668Y19.297I0.000J1.250</span>
<span class="t ln" style="left:12.00px;top:293.00px;font-size:10.5px;color:#15151c;font-weight:700;font-style:italic;font-family:'Liberation Mono', monospace;">9</span>
<span class="t code" style="left:27.50px;top:307.00px;font-size:13px;color:#00dede;letter-spacing:1.210px;font-weight:700;font-family:'Liberation Mono', monospace;">G1Y58.086</span>
<span class="t ln" style="left:5.00px;top:308.00px;font-size:10.5px;color:#15151c;letter-spacing:1.091px;font-weight:700;font-style:italic;font-family:'Liberation Mono', monospace;">10</span>
<span class="t code" style="left:27.50px;top:322.00px;font-size:13px;color:#00dede;letter-spacing:1.202px;font-weight:700;font-family:'Liberation Mono', monospace;">G3X78.418Y59.336I-1.250J0.000</span>
<span class="t ln" style="left:5.00px;top:323.00px;font-size:10.5px;color:#15151c;letter-spacing:1.091px;font-weight:700;font-style:italic;font-family:'Liberation Mono', monospace;">11</span>
<span class="t code" style="left:27.50px;top:337.00px;font-size:13px;color:#00dede;letter-spacing:1.210px;font-weight:700;font-family:'Liberation Mono', monospace;">G1X69.824</span>
<span class="t ln" style="left:5.00px;top:338.00px;font-size:10.5px;color:#15151c;letter-spacing:1.091px;font-weight:700;font-style:italic;font-family:'Liberation Mono', monospace;">12</span>
<span class="t code" style="left:27.50px;top:352.00px;font-size:13px;color:#00dede;letter-spacing:1.210px;font-weight:700;font-family:'Liberation Mono', monospace;">G1Y69.453</span>
<span class="t ln" style="left:5.00px;top:353.00px;font-size:10.5px;color:#15151c;letter-spacing:1.091px;font-weight:700;font-style:italic;font-family:'Liberation Mono', monospace;">13</span>
<span class="t code" style="left:27.50px;top:367.00px;font-size:13px;color:#00dede;letter-spacing:1.202px;font-weight:700;font-family:'Liberation Mono', monospace;">G3X68.574Y70.703I-1.250J0.000</span>
<span class="t ln" style="left:5.00px;top:368.00px;font-size:10.5px;color:#15151c;letter-spacing:1.091px;font-weight:700;font-style:italic;font-family:'Liberation Mono', monospace;">14</span>
<span class="t code" style="left:27.50px;top:382.00px;font-size:13px;color:#00dede;letter-spacing:1.210px;font-weight:700;font-family:'Liberation Mono', monospace;">G1X26.270</span>
<span class="t ln" style="left:5.00px;top:383.00px;font-size:10.5px;color:#15151c;letter-spacing:1.091px;font-weight:700;font-style:italic;font-family:'Liberation Mono', monospace;">15</span>
<span class="t code" style="left:27.50px;top:397.00px;font-size:13px;color:#00dede;letter-spacing:1.202px;font-weight:700;font-family:'Liberation Mono', monospace;">G3X25.020Y69.453I0.000J-1.250</span>
<span class="t ln" style="left:5.00px;top:398.00px;font-size:10.5px;color:#15151c;letter-spacing:1.091px;font-weight:700;font-style:italic;font-family:'Liberation Mono', monospace;">16</span>
<span class="t code" style="left:27.50px;top:412.00px;font-size:13px;color:#00dede;letter-spacing:1.210px;font-weight:700;font-family:'Liberation Mono', monospace;">G1Y59.336</span>
<span class="t ln" style="left:5.00px;top:413.00px;font-size:10.5px;color:#15151c;letter-spacing:1.091px;font-weight:700;font-style:italic;font-family:'Liberation Mono', monospace;">17</span>
<span class="t code" style="left:27.50px;top:427.00px;font-size:13px;color:#00dede;letter-spacing:1.210px;font-weight:700;font-family:'Liberation Mono', monospace;">G1X17.012</span>
<span class="t ln" style="left:5.00px;top:428.00px;font-size:10.5px;color:#15151c;letter-spacing:1.091px;font-weight:700;font-style:italic;font-family:'Liberation Mono', monospace;">18</span>
<span class="t code" style="left:27.50px;top:442.00px;font-size:13px;color:#00dede;letter-spacing:1.202px;font-weight:700;font-family:'Liberation Mono', monospace;">G3X15.762Y58.086I0.000J-1.250</span>
<span class="t ln" style="left:5.00px;top:443.00px;font-size:10.5px;color:#15151c;letter-spacing:1.091px;font-weight:700;font-style:italic;font-family:'Liberation Mono', monospace;">19</span>
<span class="t code" style="left:27.50px;top:457.00px;font-size:13px;color:#00dede;letter-spacing:1.210px;font-weight:700;font-family:'Liberation Mono', monospace;">G1Y19.297</span>
<span class="t ln" style="left:5.00px;top:458.00px;font-size:10.5px;color:#15151c;letter-spacing:1.091px;font-weight:700;font-style:italic;font-family:'Liberation Mono', monospace;">20</span>
<span class="t code" style="left:27.50px;top:472.00px;font-size:13px;color:#00dede;letter-spacing:1.202px;font-weight:700;font-family:'Liberation Mono', monospace;">G3X17.012Y18.047I1.250J0.000</span>
<span class="t ln" style="left:5.00px;top:473.00px;font-size:10.5px;color:#15151c;letter-spacing:1.091px;font-weight:700;font-style:italic;font-family:'Liberation Mono', monospace;">21</span>
<span class="t code" style="left:27.50px;top:487.00px;font-size:13px;color:#ff7a72;letter-spacing:1.211px;font-weight:700;font-family:'Liberation Mono', monospace;">G0Z6.000</span>
<span class="t ln" style="left:5.00px;top:488.00px;font-size:10.5px;color:#15151c;letter-spacing:1.091px;font-weight:700;font-style:italic;font-family:'Liberation Mono', monospace;">22</span>
<span class="t code" style="left:27.50px;top:502.00px;font-size:13px;color:#ff7a72;letter-spacing:1.210px;font-weight:700;font-family:'Liberation Mono', monospace;">G0Z20.000</span>
<span class="t ln" style="left:5.00px;top:503.00px;font-size:10.5px;color:#15151c;letter-spacing:1.091px;font-weight:700;font-style:italic;font-family:'Liberation Mono', monospace;">23</span>
<span class="t code" style="left:27.50px;top:517.00px;font-size:13px;color:#ff7a72;letter-spacing:1.206px;font-weight:700;font-family:'Liberation Mono', monospace;">G0X0.000Y0.000</span>
<span class="t ln" style="left:5.00px;top:518.00px;font-size:10.5px;color:#15151c;letter-spacing:1.091px;font-weight:700;font-style:italic;font-family:'Liberation Mono', monospace;">24</span>
<span class="t code" style="left:27.50px;top:532.00px;font-size:13px;color:#49a3ff;letter-spacing:1.291px;font-weight:700;font-family:'Liberation Mono', monospace;">M2</span>
<span class="t ln" style="left:5.00px;top:533.00px;font-size:10.5px;color:#15151c;letter-spacing:1.091px;font-weight:700;font-style:italic;font-family:'Liberation Mono', monospace;">25</span>
<span class="t code" style="left:27.50px;top:547.00px;font-size:13px;color:#49a3ff;font-weight:700;font-family:'Liberation Mono', monospace;">%</span>
<span class="t ln" style="left:5.00px;top:548.00px;font-size:10.5px;color:#15151c;letter-spacing:1.091px;font-weight:700;font-style:italic;font-family:'Liberation Mono', monospace;">26</span>
<div id="splitter"></div>
<div id="viewport"><div class="tri"></div><svg style="left:0;top:0" width="932" height="698" viewBox="0 0 932 698">
<g fill="none" stroke-linejoin="round" stroke-linecap="round">
<path d="M-177.5 108.7 L69.4 104.5 L69.4 218.2 M-177.5 108.7 L69.4 218.2" stroke="#5a3b39" stroke-width="1.1"/>
<path d="M69.4 218.2 L69.4 299.4" stroke="#a9beb9" stroke-width="1.3"/>
<path d="M69.4 299.4 L501.7 548.1 L501.7 548.1 L503.2 548.9 L504.9 549.4 L506.7 549.9 L508.6 550.1 L510.5 550.2 L512.5 550.1 L514.4 549.9 L516.2 549.4 L517.8 548.9 L519.3 548.1 L792.4 391.0 L792.4 391.0 L793.7 390.1 L794.7 389.2 L795.5 388.1 L795.9 387.0 L796.1 385.9 L795.9 384.8 L795.5 383.7 L794.7 382.7 L793.7 381.7 L792.4 380.9 L731.9 346.0 L803.1 305.1 L803.1 305.1 L804.4 304.2 L805.4 303.3 L806.2 302.2 L806.6 301.1 L806.8 300.0 L806.6 298.9 L806.2 297.8 L805.4 296.7 L804.4 295.8 L803.1 294.9 L505.3 123.6 L505.3 123.6 L503.8 122.8 L502.1 122.2 L500.3 121.8 L498.4 121.6 L496.5 121.5 L494.5 121.6 L492.6 121.8 L490.8 122.2 L489.2 122.8 L487.7 123.6 L416.5 164.5 L360.1 132.1 L360.1 132.1 L358.6 131.4 L356.9 130.8 L355.1 130.4 L353.2 130.1 L351.3 130.0 L349.3 130.1 L347.4 130.4 L345.6 130.8 L343.9 131.4 L342.5 132.1 L69.4 289.2 L69.4 289.2 L68.1 290.1 L67.1 291.1 L66.3 292.1 L65.9 293.2 L65.7 294.3 L65.9 295.4 L66.3 296.5 L67.1 297.6 L68.1 298.5 L69.4 299.4" stroke="#70dad0" stroke-width="1.35"/>
</g></svg></div>
<div id="panel"></div>
<div class="track" style="left:360px;top:878px;width:907px"></div>
<svg style="left:353px;top:870px" width="10" height="19" viewBox="0 0 10 19">
<defs><linearGradient id="th353" x1="0" y1="0" x2="1" y2="0"><stop offset="0" stop-color="#5e5e5e"/><stop offset="1" stop-color="#3c3c3c"/></linearGradient></defs>
<path d="M0.7 5.2 L4.6 0.8 L8.4 5.2 V16.4 Q8.4 17.8 7 17.8 H2.1 Q0.7 17.8 0.7 16.4 Z" fill="url(#th353)" stroke="#1c1c1c" stroke-width="1"/></svg>
<svg style="left:351px;top:911px" width="22" height="26" viewBox="0 0 22 26">
<path d="M7.6 3.6 H18.6 L19.8 4.8 V7 H16.2 V15.6 L14.6 17 H13" fill="#8e8e8e"/>
<rect x="6.4" y="2.4" width="11.4" height="3.6" rx="0.6" fill="#f4f4f4" stroke="#3e3e3e" stroke-width="1"/>
<rect x="10.6" y="6" width="3.2" height="10" rx="1" fill="#fafafa" stroke="#3e3e3e" stroke-width="1"/>
<path d="M2.6 16.6 L8.2 22.6 M8.2 16.6 L2.6 22.6" stroke="#f0e81a" stroke-width="2.2"/><path d="M2.6 16.6 L8.2 22.6 M8.2 16.6 L2.6 22.6" stroke="#c8c010" stroke-width="0.6" opacity=".6"/></svg>
<span class="t" style="left:378.00px;top:901.00px;font-size:11px;color:#0c0c0c;letter-spacing:0.594px;">X:</span>
<div class="fld" style="left:391px;top:897px;width:106px"></div>
<span class="t" style="left:378.00px;top:919.00px;font-size:11px;color:#0c0c0c;letter-spacing:1.203px;">Y:</span>
<div class="fld" style="left:391px;top:915px;width:106px"></div>
<span class="t" style="left:378.20px;top:937.00px;font-size:11px;color:#0c0c0c;letter-spacing:1.019px;">Z:</span>
<div class="fld" style="left:391px;top:933px;width:106px"></div>
<span class="t" style="left:504.80px;top:901.00px;font-size:11px;color:#0c0c0c;letter-spacing:0.475px;">I:</span>
<div class="fld" style="left:517px;top:897px;width:106px"></div>
<span class="t" style="left:504.00px;top:919.00px;font-size:11px;color:#0c0c0c;letter-spacing:-1.163px;">J:</span>
<div class="fld" style="left:517px;top:915px;width:106px"></div>
<span class="t" style="left:504.40px;top:937.00px;font-size:11px;color:#0c0c0c;letter-spacing:-0.606px;">K:</span>
<div class="fld" style="left:517px;top:933px;width:106px"></div>
<span class="t" style="left:466.80px;top:901.00px;font-size:11px;color:#0c0c0c;letter-spacing:0.217px;">0.000</span>
<span class="t" style="left:466.80px;top:919.00px;font-size:11px;color:#0c0c0c;letter-spacing:0.217px;">0.000</span>
<span class="t" style="left:460.60px;top:937.00px;font-size:11px;color:#0c0c0c;letter-spacing:0.189px;">20.000</span>
<span class="t" style="left:631.20px;top:901.00px;font-size:11px;color:#0c0c0c;letter-spacing:0.188px;">Tool:</span>
<span class="t" style="left:631.40px;top:919.00px;font-size:11px;color:#0c0c0c;letter-spacing:-0.335px;">Feed:</span>
<div class="fld" style="left:660px;top:897px;width:106px"></div><div class="fld" style="left:660px;top:915px;width:106px"></div>
<span class="t" style="left:750.00px;top:901.00px;font-size:11px;color:#0c0c0c;letter-spacing:0.356px;">T1</span>
<span class="t" style="left:734.80px;top:919.00px;font-size:11px;color:#0c0c0c;letter-spacing:0.138px;">Rapid</span>
<span class="t" style="left:774.30px;top:901.00px;font-size:11px;color:#0c0c0c;letter-spacing:-0.252px;">Dist.:</span>
<span class="t" style="left:774.00px;top:919.00px;font-size:11px;color:#0c0c0c;letter-spacing:0.101px;">Total:</span>
<span class="t" style="left:774.30px;top:937.00px;font-size:11px;color:#0c0c0c;letter-spacing:0.300px;">R:</span>
<div class="fld" style="left:803px;top:897px;width:106px"></div>
<div class="fld" style="left:803px;top:915px;width:106px"></div>
<div class="fld" style="left:803px;top:933px;width:106px"></div>
<span class="t" style="left:878.70px;top:901.00px;font-size:11px;color:#0c0c0c;letter-spacing:0.217px;">0.000</span>
<span class="t" style="left:866.90px;top:919.00px;font-size:11px;color:#0c0c0c;letter-spacing:0.072px;">317.186</span>
<svg style="left:1080px;top:892.5px" width="190" height="7" viewBox="0 0 190 7"><rect x="17.0" y="1.6" width="0.9" height="4" fill="#8e8e8e"/><rect x="25.6" y="1.6" width="0.9" height="4" fill="#8e8e8e"/><rect x="34.2" y="1.6" width="0.9" height="4" fill="#8e8e8e"/><rect x="42.8" y="1.6" width="0.9" height="4" fill="#8e8e8e"/><rect x="51.3" y="1.4" width="1.1" height="4.4" fill="#111"/><rect x="60.0" y="1.6" width="0.9" height="4" fill="#8e8e8e"/><rect x="68.6" y="1.6" width="0.9" height="4" fill="#8e8e8e"/><rect x="77.2" y="1.6" width="0.9" height="4" fill="#8e8e8e"/><rect x="85.8" y="1.6" width="0.9" height="4" fill="#8e8e8e"/><rect x="93.7" y="0.6" width="2.4" height="5.6" fill="#c8c8c8" stroke="#555" stroke-width="0.7"/><rect x="103.0" y="1.6" width="0.9" height="4" fill="#8e8e8e"/><rect x="111.7" y="1.6" width="0.9" height="4" fill="#8e8e8e"/><rect x="120.3" y="1.6" width="0.9" height="4" fill="#8e8e8e"/><rect x="128.9" y="1.6" width="0.9" height="4" fill="#8e8e8e"/><rect x="137.4" y="1.4" width="1.1" height="4.4" fill="#111"/><rect x="146.1" y="1.6" width="0.9" height="4" fill="#8e8e8e"/><rect x="154.7" y="1.6" width="0.9" height="4" fill="#8e8e8e"/><rect x="163.3" y="1.6" width="0.9" height="4" fill="#8e8e8e"/><rect x="171.9" y="1.6" width="0.9" height="4" fill="#8e8e8e"/><path d="M9 0.8 L6 3.5 L9 6.2 Z" fill="#9a9a9a" stroke="#555" stroke-width="0.6"/><path d="M180.6 0.8 L183.8 3.5 L180.6 6.2 Z" fill="#9a9a9a" stroke="#555" stroke-width="0.6"/></svg>
<div class="track" style="left:1083px;top:910px;width:184px"></div>
<svg style="left:1170px;top:902px" width="10" height="19" viewBox="0 0 10 19">
<defs><linearGradient id="th1170" x1="0" y1="0" x2="1" y2="0"><stop offset="0" stop-color="#5e5e5e"/><stop offset="1" stop-color="#3c3c3c"/></linearGradient></defs>
<path d="M0.7 5.2 L4.6 0.8 L8.4 5.2 V16.4 Q8.4 17.8 7 17.8 H2.1 Q0.7 17.8 0.7 16.4 Z" fill="url(#th1170)" stroke="#1c1c1c" stroke-width="1"/></svg>
<svg style="left:1084px;top:929px" width="192" height="27" viewBox="0 0 192 27">
<defs><linearGradient id="pb" x1="0" y1="0" x2="1" y2="1"><stop offset="0" stop-color="#3a7ae8"/><stop offset="1" stop-color="#0c2c9c"/></linearGradient></defs>
<path d="M3.8 4.4 L12.6 12 L3.8 19.6 Z" fill="url(#pb)" stroke="#0a2890" stroke-width="0.6"/>
<rect x="35" y="4" width="1.7" height="16" fill="#8f96cc"/><rect x="38.5" y="4" width="1.7" height="16" fill="#8f96cc"/>
<rect x="51" y="2" width="1.1" height="19" fill="#0a0a0a"/>
<g fill="url(#pb)" stroke="#0a2890" stroke-width="0.5">
<path d="M60 7 L65.4 12.4 L60 18 Z"/><path d="M64.6 7 L70.2 12.4 L64.6 18 Z"/>
<path d="M89 7 L94.4 12.4 L89 18 Z"/><path d="M93.6 7 L99.2 12.4 L93.6 18 Z"/>
<path d="M118 7 L123.4 12.4 L118 18 Z"/><path d="M122.6 7 L128.2 12.4 L122.6 18 Z"/>
<path d="M146 7 L151.4 12.4 L146 18 Z"/><path d="M150.6 7 L156.2 12.4 L150.6 18 Z"/>
<path d="M179.4 24 L189.6 14 V24 Z"/></g>
<circle cx="69.4" cy="5.4" r="2" fill="#ffe81a" stroke="#c01818" stroke-width="0.9"/>
<path d="M99.6 6.4 L104.6 11.6" stroke="#1c6ad8" stroke-width="1.6"/><circle cx="98.4" cy="5.2" r="2" fill="#ffe81a" stroke="#c01818" stroke-width="0.9"/>
<path d="M128.6 4.2 H132.6 L128.6 8.8 H132.8" fill="none" stroke="#1c3cb0" stroke-width="1.2"/>
<rect x="155" y="2.8" width="6.6" height="2.4" rx="0.4" fill="#fff" stroke="#111" stroke-width="0.8"/><rect x="157.2" y="5.2" width="2.2" height="5.4" rx="0.8" fill="#fff" stroke="#111" stroke-width="0.8"/>
</svg>
<div id="status"><div class="lite"></div><div class="dark"></div></div>
<span class="t" style="left:920.20px;top:966.00px;font-size:11.3px;color:#22232e;letter-spacing:-0.108px;">Unlicensed DEMO version</span>
<span class="t" style="left:1061.10px;top:966.00px;font-size:11.3px;color:#22232e;letter-spacing:-0.075px;">Ln 4/26, Col 2, 394 bytes</span>
<span class="t" style="left:1201.60px;top:966.00px;font-size:11.3px;color:#22232e;letter-spacing:-0.672px;">INS</span>
<span class="t" style="left:1232.00px;top:966.00px;font-size:11.3px;color:#22232e;letter-spacing:-0.198px;">22:54:28</span>
</div>
</body>
</html>
